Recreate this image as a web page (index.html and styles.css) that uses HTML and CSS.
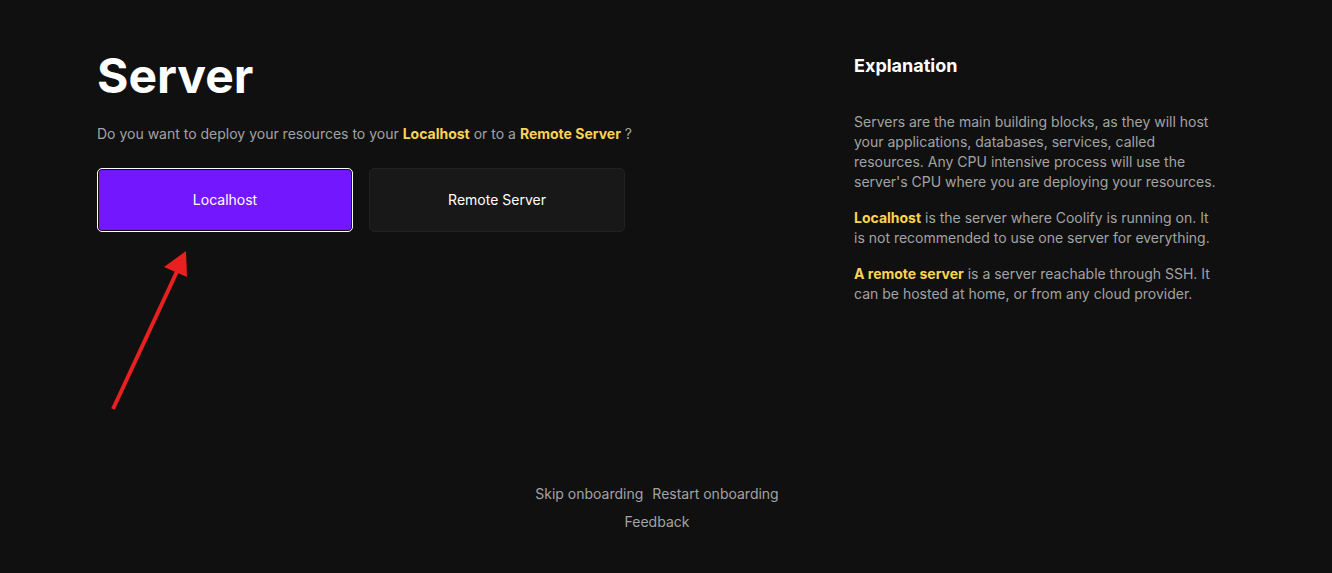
FILE: index.html
```html
<!DOCTYPE html>
<html lang="en">
<head>
<meta charset="utf-8">
<title>Server - Onboarding</title>
<link rel="stylesheet" href="styles.css">
</head>
<body>
<div class="page">
  <div class="content">
    <section class="main">
      <h1 class="title">Server</h1>
      <p class="question">Do you want to deploy your resources to your <span class="hl">Localhost</span> or to a <span class="hl">Remote Server</span> ?</p>
      <div class="choices">
        <button class="choice choice-active">Localhost</button>
        <button class="choice">Remote Server</button>
      </div>
    </section>
    <aside class="explain">
      <h2 class="explain-title">Explanation</h2>
      <p class="explain-text">Servers are the main building blocks, as they will host your applications, databases, services, called resources. Any CPU intensive process will use the server's CPU where you are deploying your resources.</p>
      <p class="explain-text"><span class="hl">Localhost</span> is the server where Coolify is running on. It is not recommended to use one server for everything.</p>
      <p class="explain-text"><span class="hl">A remote server</span> is a server reachable through SSH. It can be hosted at home, or from any cloud provider.</p>
    </aside>
  </div>
  <footer class="footer">
    <div class="footer-row">
      <a class="footer-link" href="#">Skip onboarding</a>
      <a class="footer-link" href="#">Restart onboarding</a>
    </div>
    <div class="footer-row">
      <a class="footer-link" href="#">Feedback</a>
    </div>
  </footer>
  <svg class="arrow" width="100" height="180" viewBox="0 0 100 180" aria-hidden="true">
    <line x1="13" y1="169" x2="80" y2="25" stroke="#e8201f" stroke-width="4"/>
    <polygon points="86,11 87,37 64,27" fill="#e8201f"/>
  </svg>
</div>
</body>
</html>
```
FILE: styles.css
```css
* { box-sizing: border-box; }
html, body {
  margin: 0;
  padding: 0;
  background: #101010;
}
body {
  font-family: Inter, "Noto Sans", "Liberation Sans", sans-serif;
  color: #a3a3a3;
  font-size: 14px;
  line-height: 20px;
}
.page {
  position: relative;
  width: 1332px;
  height: 573px;
  overflow: hidden;
}
.content {
  display: flex;
  padding: 52px 0 0 97px;
  height: 484px;
}
.main {
  width: 757px;
}
.title {
  margin: 0;
  font-size: 48px;
  line-height: 48px;
  font-weight: 700;
  color: #fff;
}
.question {
  margin: 24px 0 0;
  color: #a3a3a3;
}
.hl {
  color: #fcd452;
  font-weight: 700;
}
.choices {
  display: flex;
  gap: 16px;
  margin-top: 24px;
}
.choice {
  width: 256px;
  height: 64px;
  border-radius: 5px;
  font-family: inherit;
  font-size: 14px;
  font-weight: 400;
  color: #fff;
  background: #181818;
  border: 1px solid #222;
  padding: 0 0 1px;
  cursor: pointer;
}
.choice-active {
  background: #7317ff;
  border: 1px solid #fff;
  box-shadow: inset 0 0 0 1px #101010;
}
.explain {
  width: 364px;
}
.explain-title {
  margin: 0;
  font-size: 18px;
  line-height: 28px;
  font-weight: 700;
  color: #fff;
}
.explain-text {
  margin: 16px 0 0;
}
.explain-title + .explain-text {
  margin-top: 32px;
}
.footer {
  display: flex;
  flex-direction: column;
  align-items: center;
  gap: 8px;
  padding-right: 18px;
}
.footer-row {
  display: flex;
  gap: 9px;
}
.footer-link {
  color: #a3a3a3;
  text-decoration: none;
}
.arrow {
  position: absolute;
  left: 100px;
  top: 240px;
}
```
